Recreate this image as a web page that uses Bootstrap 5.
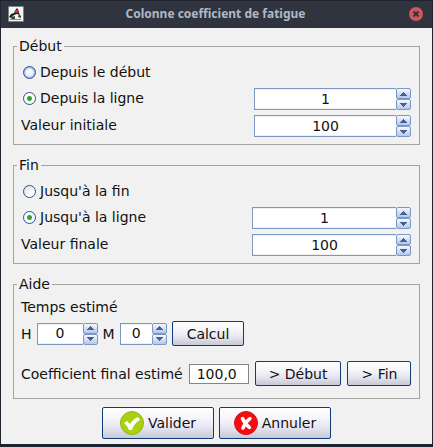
<!DOCTYPE html>
<html lang="fr">
<head>
<meta charset="utf-8">
<meta name="viewport" content="width=device-width, initial-scale=1">
<title>Colonne coefficient de fatigue</title>
<link href="https://cdn.jsdelivr.net/npm/bootstrap@5.3.0/dist/css/bootstrap.min.css" rel="stylesheet">
<style>
body { background: #1d222c; font: 14px/16px "DejaVu Sans", sans-serif; color: #111; }
.window { background: #f1f1f1; border: solid #20242e; border-width: 0 1px 3px; }
.titlebar { background: #2f343f; border-top: 1px solid #20242e; height: 28px; padding: 0 9px 2px 7px; color: #afb8c6; }
.titlebar h1 { font: bold 12px/16px "Noto Sans", sans-serif; padding-right: 2px; }
.close-btn { width: 14px; height: 14px; }
.content { padding: 10px 12px 5px; }
.groups { gap: 12px; }
.group { border: 1px solid #a3a3a3; padding: 7px 8px 7px 7px; }
.group legend { font-size: 14px; line-height: 16px; padding: 0 2px; margin-left: -4px; }
.group-help { padding-bottom: 12px; }
.rows { gap: 5px; }
.line { min-height: 22px; }
.rad { appearance: none; width: 13px; height: 13px; margin: 0 4px 0 2px; border: 1px solid #2c5191; border-radius: 50%; background: linear-gradient(135deg, #ddd, #fff 70%); }
.rad:checked { background: radial-gradient(circle, #2fa52f 0 2px, #fff 3px); }
.rad-hover { background: radial-gradient(circle, #f4f6fb 0 3px, #a9c2f0 5px); }
.spin-line > label { padding-bottom: 2px; }
.spin-line > .rad { margin-bottom: 2px; }
.spin { height: 22px; }
.spin input { width: 0; min-width: 0; border: 1px solid #7a98c2; border-right: 0; background: #fff; padding: 0 0 1px; text-align: center; box-shadow: inset 0 1px #eef0f2, inset 0 -1px #eef0f2; color: #111; }
.arrows { width: 15px; flex: none; gap: 0; }
.arrows button { flex: 1; padding: 0; border: 1px solid #7a98c2; border-radius: 2px; background: linear-gradient(#f5f8ff, #b4c6ec); line-height: 0; display: flex; align-items: center; justify-content: center; }
.spin-start { width: 157px; }
.spin-end { width: 159px; }
.spin-h { width: 61px; }
.spin-m { width: 47px; }
.result { width: 60px; height: 20px; border: 1px solid #858585; padding: 0 7px; background: #fff; color: #111; }
.metal { --bs-btn-padding-y: 0; --bs-btn-font-size: 14px; --bs-btn-line-height: 16px; --bs-btn-border-radius: 2px; --bs-btn-color: #111; --bs-btn-border-color: #0e3c7a; --bs-btn-hover-border-color: #0e3c7a; --bs-btn-padding-x: 14px; height: 25px; background: linear-gradient(#fff, #f3f3fa 40%, #e6e6f2 65%, #c8c8d6); }
.action { --bs-btn-padding-x: 4px; width: 112px; height: 32px; }
.help-title { line-height: 17px; }
.help-row { gap: 5px; }
.coef-row { margin-top: 10px; gap: 6px; --pad: 13px; }
.coef-row .metal { --bs-btn-padding-x: 13px; }
</style>
<script src="https://cdn.jsdelivr.net/npm/bootstrap@5.3.0/dist/js/bootstrap.bundle.min.js"></script>
</head>
<body>
<svg class="d-none">
  <symbol id="up" viewBox="0 0 7 4"><path fill="#47618c" d="M3 0h1v1h1v1h1v1h1v1H0V3h1V2h1V1h1z"/></symbol>
  <symbol id="down" viewBox="0 0 7 4"><path fill="#47618c" d="M0 0h7v1H6v1H5v1H4v1H3V3H2V2H1V1H0z"/></symbol>
</svg>
<main class="window">
  <header class="titlebar d-flex align-items-center">
    <svg width="16" height="16" viewBox="0 0 16 16" aria-hidden="true">
      <rect width="16" height="16" rx="1" fill="#6e8794"/><rect x="1" y="1" width="14" height="14" fill="#f4f4f2"/>
      <path fill="#222" d="M9 2q2 2 2 5l1 2-3-1-3 1-3 3-2-1 2-3 3-1q1-3 3-5z"/><path fill="#444" d="M11 8l2 2v2l-3-1zM4 11l3-1v3H3z"/><path fill="#f3f3f3" d="M7 9l3 0v3H7z"/><circle cx="8.500" cy="5.500" r="1.700" fill="#d62b2b"/><path fill="#8a9498" d="M2 13h11v1H2z"/>
    </svg>
    <h1 class="flex-grow-1 text-center m-0">Colonne coefficient de fatigue</h1>
    <button type="button" class="close-btn border-0 p-0 bg-transparent d-flex" aria-label="Fermer">
      <svg width="14" height="14" viewBox="0 0 14 14"><circle cx="7" cy="7" r="7" fill="#cc575d"/><path d="M4.500 4.500l5 5m0-5l-5 5" stroke="#2f343f" stroke-width="2"/></svg>
    </button>
  </header>
  <form class="content">
    <div class="groups d-flex flex-column">
      <fieldset class="group">
        <legend class="float-none w-auto mb-0">Début</legend>
        <div class="rows d-flex flex-column">
          <div class="line d-flex align-items-center"><input class="rad rad-hover" type="radio" name="debut" id="d1"><label for="d1">Depuis le début</label></div>
          <div class="line spin-line d-flex align-items-center">
            <input class="rad" type="radio" name="debut" id="d2" checked><label for="d2">Depuis la ligne</label>
            <div class="spin spin-start d-flex ms-auto"><input class="flex-grow-1" type="text" value="1" aria-label="Ligne de début"><span class="arrows d-flex flex-column"><button type="button" aria-label="Plus"><svg width="7" height="4"><use href="#up"/></svg></button><button type="button" aria-label="Moins"><svg width="7" height="4"><use href="#down"/></svg></button></span></div>
          </div>
          <div class="line spin-line d-flex align-items-center">
            <label for="vi">Valeur initiale</label>
            <div class="spin spin-start d-flex ms-auto"><input class="flex-grow-1" type="text" value="100" id="vi"><span class="arrows d-flex flex-column"><button type="button" aria-label="Plus"><svg width="7" height="4"><use href="#up"/></svg></button><button type="button" aria-label="Moins"><svg width="7" height="4"><use href="#down"/></svg></button></span></div>
          </div>
        </div>
      </fieldset>
      <fieldset class="group">
        <legend class="float-none w-auto mb-0">Fin</legend>
        <div class="rows d-flex flex-column">
          <div class="line d-flex align-items-center"><input class="rad" type="radio" name="fin" id="f1"><label for="f1">Jusqu'à la fin</label></div>
          <div class="line spin-line d-flex align-items-center">
            <input class="rad" type="radio" name="fin" id="f2" checked><label for="f2">Jusqu'à la ligne</label>
            <div class="spin spin-end d-flex ms-auto"><input class="flex-grow-1" type="text" value="1" aria-label="Ligne de fin"><span class="arrows d-flex flex-column"><button type="button" aria-label="Plus"><svg width="7" height="4"><use href="#up"/></svg></button><button type="button" aria-label="Moins"><svg width="7" height="4"><use href="#down"/></svg></button></span></div>
          </div>
          <div class="line spin-line d-flex align-items-center">
            <label for="vf">Valeur finale</label>
            <div class="spin spin-end d-flex ms-auto"><input class="flex-grow-1" type="text" value="100" id="vf"><span class="arrows d-flex flex-column"><button type="button" aria-label="Plus"><svg width="7" height="4"><use href="#up"/></svg></button><button type="button" aria-label="Moins"><svg width="7" height="4"><use href="#down"/></svg></button></span></div>
          </div>
        </div>
      </fieldset>
      <fieldset class="group group-help">
        <legend class="float-none w-auto mb-0">Aide</legend>
        <div class="rows d-flex flex-column">
          <div class="help-title">Temps estimé</div>
          <div class="help-row d-flex align-items-center">
            <label for="h">H</label>
            <div class="spin spin-h d-flex"><input class="flex-grow-1" type="text" value="0" id="h"><span class="arrows d-flex flex-column"><button type="button" aria-label="Plus"><svg width="7" height="4"><use href="#up"/></svg></button><button type="button" aria-label="Moins"><svg width="7" height="4"><use href="#down"/></svg></button></span></div>
            <label for="m">M</label>
            <div class="spin spin-m d-flex"><input class="flex-grow-1" type="text" value="0" id="m"><span class="arrows d-flex flex-column"><button type="button" aria-label="Plus"><svg width="7" height="4"><use href="#up"/></svg></button><button type="button" aria-label="Moins"><svg width="7" height="4"><use href="#down"/></svg></button></span></div>
            <button type="button" class="btn metal">Calcul</button>
          </div>
          <div class="coef-row d-flex align-items-center">
            <label for="coef" class="text-nowrap">Coefficient final estimé</label>
            <input class="result" type="text" value="100,0" id="coef">
            <button type="button" class="btn metal text-nowrap">&gt; Début</button>
            <button type="button" class="btn metal text-nowrap">&gt; Fin</button>
          </div>
        </div>
      </fieldset>
    </div>
    <div class="help-row d-flex justify-content-center pt-2">
      <button type="submit" class="btn metal action d-flex align-items-center justify-content-center gap-1">
        <svg width="24" height="24" viewBox="0 0 24 24" aria-hidden="true"><circle cx="12" cy="12" r="11.500" fill="#a9d111" stroke="#93b80c"/><path d="M4 12l3-2 3 3q3-5 8-7l2 3q-6 3-8 10h-3q-2-5-5-7z" fill="#fff"/></svg>
        Valider</button>
      <button type="button" class="btn metal action d-flex align-items-center justify-content-center gap-1">
        <svg width="24" height="24" viewBox="0 0 24 24" aria-hidden="true"><circle cx="12" cy="12" r="11.500" fill="#f50d12" stroke="#d41218"/><path d="M8.500 7.500q2 5 7 9M16 7.500q-5 4-7 9.500" fill="none" stroke="#fff" stroke-width="3.500" stroke-linecap="round"/></svg>
        Annuler</button>
    </div>
  </form>
</main>
</body>
</html>
